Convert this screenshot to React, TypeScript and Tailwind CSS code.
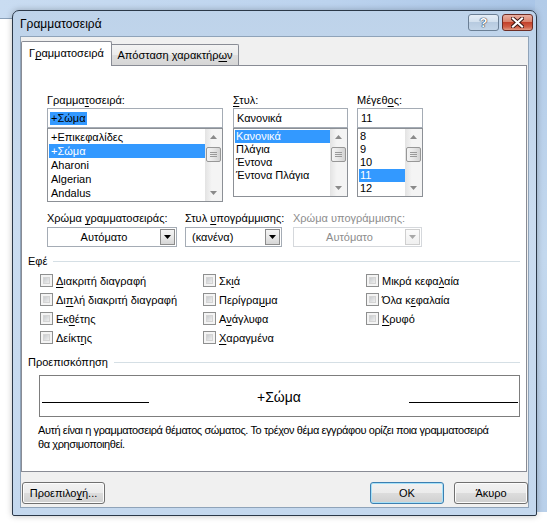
import React from "react";

function U({ children }: { children: React.ReactNode }) {
  return <span className="underline underline-offset-[2px] decoration-[1px]">{children}</span>;
}

function ScrollBar() {
  return (
    <div className="w-[17px] h-full flex flex-col bg-[linear-gradient(to_right,#e3e3e3,#f4f4f4_40%,#f4f4f4)]">
      <div className="h-[16px] flex items-center justify-center">
        <svg width="7" height="4" viewBox="0 0 7 4">
          <path d="M0 4L3.5 0L7 4Z" fill="#8a8a8a" />
        </svg>
      </div>
      <div className="mt-[2px] mx-[1px] h-[15px] rounded-[2px] border border-[#979797] bg-[linear-gradient(to_right,#f4f4f4,#e6e6e6_50%,#d3d3d3)] flex flex-col items-center justify-center gap-[1px]">
        <div className="w-[7px] h-[1px] bg-[#9a9a9a]" />
        <div className="w-[7px] h-[1px] bg-[#9a9a9a]" />
        <div className="w-[7px] h-[1px] bg-[#9a9a9a]" />
      </div>
      <div className="flex-1" />
      <div className="h-[16px] flex items-center justify-center">
        <svg width="7" height="4" viewBox="0 0 7 4">
          <path d="M0 0L7 0L3.5 4Z" fill="#8a8a8a" />
        </svg>
      </div>
    </div>
  );
}

function Check({ children }: { children: React.ReactNode }) {
  return (
    <div className="h-[19px] flex items-center">
      <span className="w-[13px] h-[13px] border border-[#8e8f8f] bg-[#f4f4f4] p-[2px] flex">
        <span className="flex-1 bg-[linear-gradient(135deg,#c9cccf,#eeeeee)] border border-[#d4d4d4]" />
      </span>
      <span className="ml-[3px] whitespace-nowrap">{children}</span>
    </div>
  );
}

function Combo({ text, center, disabled }: { text: string; center?: boolean; disabled?: boolean }) {
  return (
    <div
      className={
        disabled
          ? "h-[20px] border border-[#d5d8dc] bg-white flex items-center"
          : "h-[20px] border border-[#a5acb5] bg-white flex items-center"
      }
    >
      <div
        className={
          (center ? "flex-1 text-center " : "flex-1 pl-[6px] ") + (disabled ? "text-[#8d8d8d]" : "text-black")
        }
      >
        {text}
      </div>
      <div
        className={
          disabled
            ? "w-[15px] h-[16px] mr-[1px] border border-[#cfcfcf] bg-[linear-gradient(to_bottom,#fbfbfb,#f0f0f0)] flex items-center justify-center"
            : "w-[15px] h-[16px] mr-[1px] border border-[#8c8c8c] bg-[linear-gradient(to_bottom,#f4f4f4,#e8e8e8_50%,#d6d6d6)] flex items-center justify-center"
        }
      >
        <svg width="7" height="4" viewBox="0 0 7 4">
          <path d="M0 0L7 0L3.5 4Z" fill={disabled ? "#a8a8a8" : "#000"} />
        </svg>
      </div>
    </div>
  );
}

function Header({ children }: { children: React.ReactNode }) {
  return (
    <div className="h-[14px] flex items-center pl-[6px] pr-[6px]">
      <span className="whitespace-nowrap">{children}</span>
      <div className="ml-[6px] flex-1 h-[1px] bg-[#d5dfe5]" />
    </div>
  );
}

function Btn({ children, def, w }: { children: React.ReactNode; def?: boolean; w: string }) {
  return (
    <div
      className={
        (def
          ? "border-[#3c7fb1] shadow-[inset_0_0_0_1px_#a7e1f8] "
          : "border-[#707070] shadow-[inset_0_0_0_1px_#fcfcfc] ") +
        w +
        " h-[22px] rounded-[3px] border bg-[linear-gradient(to_bottom,#f2f2f2,#ebebeb_50%,#dddddd_50%,#cfcfcf)] flex items-center justify-center"
      }
    >
      {children}
    </div>
  );
}

export default function App() {
  return (
    <div className="relative w-[547px] h-[525px] overflow-hidden bg-white font-['Liberation_Sans',Arial,sans-serif] text-[11px] leading-[14px] text-black">
      <div className="absolute left-0 top-0 w-full h-[18px] bg-[linear-gradient(to_right,#c9dcf1,#bcd3ee_60%,#a9c5e7)]" />
      <div className="absolute left-0 top-[18px] w-[12px] h-[1px] bg-[#8aa0b8]" />
      <div className="absolute right-0 top-0 w-[12px] h-[512px] bg-[linear-gradient(to_bottom,#b2cbe8,#c3d8ee_50%,#b9d0ea)]" />

      <div className="relative ml-[12px] mt-[10px] w-[525px] h-[506px] rounded-t-[7px] rounded-b-[2px] border border-[#2b3848] bg-[linear-gradient(to_bottom,#bed3ea,#cadcf0_40%,#c4d8ee)] px-[7px] pb-[7px] flex flex-col shadow-[0_0_6px_rgba(0,0,0,0.25)]">
        <div className="h-[25px] flex items-start">
          <div className="pt-[6px] text-[12px] leading-[14px] text-black flex-1">Γραμματοσειρά</div>
          <div className="mt-[3px] w-[31px] h-[17px] rounded-[3px] border border-[#6b7f95] bg-[linear-gradient(to_bottom,#e6eef7,#d2e0ee_45%,#b7cbe0_50%,#c3d5e8)] flex items-center justify-center">
            <span className="text-[13px] leading-[13px] font-bold text-white [text-shadow:0_0_1px_#26384d,0_0_1px_#26384d,0_0_1px_#26384d]">?</span>
          </div>
          <div className="mt-[3px] ml-[3px] mr-[-4px] w-[31px] h-[17px] rounded-[3px] border border-[#6e2d24] bg-[linear-gradient(to_bottom,#eab0a1,#d9836d_45%,#c3412a_50%,#d06048_80%,#e19a82)] flex items-center justify-center">
            <svg width="13" height="11" viewBox="0 0 13 11">
              <path d="M2 1.5L11 9.5M11 1.5L2 9.5" stroke="#3a1510" strokeWidth="4" strokeLinecap="square" />
              <path d="M2 1.5L11 9.5M11 1.5L2 9.5" stroke="#ffffff" strokeWidth="2.2" strokeLinecap="square" />
            </svg>
          </div>
        </div>

        <div className="flex-1 border border-[#8fa3b9] bg-[#f0f0f0] flex flex-col">
          <div className="mt-[4px] h-[24px] flex items-end">
            <div className="relative z-10 -mb-px w-[91px] h-[25px] bg-white border border-b-0 border-[#898c95] rounded-t-[2px] pt-[4px] text-center">
              Γ<U>ρ</U>αμματοσειρά
            </div>
            <div className="w-[127px] h-[21px] border border-l-0 border-b-0 border-[#898c95] rounded-tr-[2px] bg-[linear-gradient(to_bottom,#f3f3f3,#ebebeb_50%,#dedede_50%,#d6d6d6)] pt-[3px] text-center">
              Απόσταση χαρακτήρ<U>ω</U>ν
            </div>
          </div>

          <div className="w-[506px] h-[407px] border border-[#898c95] bg-white flex flex-col">
            <div className="mt-[27px] pl-[25px] flex items-start">
              <div className="w-[176px] flex flex-col">
                <div className="h-[14px]">
                  Γραμμα<U>τ</U>οσειρά:
                </div>
                <div className="mt-[1px] h-[20px] border border-[#a5acb5] flex items-center pl-[2px]">
                  <span className="bg-[#3399ff] px-[1px] leading-[13px]">+Σώμα</span>
                </div>
                <div className="h-[74px] border border-[#8c9096] flex">
                  <div className="flex-1 pt-[1px] pl-[1px]">
                    <div className="h-[14px] pl-[2px]">+Επικεφαλίδες</div>
                    <div className="h-[14px] pl-[2px] bg-[#3399ff] text-white">+Σώμα</div>
                    <div className="h-[14px] pl-[2px]">Aharoni</div>
                    <div className="h-[14px] pl-[2px]">Algerian</div>
                    <div className="h-[14px] pl-[2px]">Andalus</div>
                  </div>
                  <ScrollBar />
                </div>
              </div>

              <div className="ml-[10px] w-[115px] flex flex-col">
                <div className="h-[14px]">
                  <U>Σ</U>τυλ:
                </div>
                <div className="mt-[1px] h-[20px] border border-[#a5acb5] flex items-center pl-[3px]">Κανονικά</div>
                <div className="h-[69px] border border-[#8c9096] flex">
                  <div className="flex-1 pt-[1px] pl-[1px]">
                    <div className="h-[13px] leading-[13px] pl-[1px] bg-[#3399ff] text-white">Κανονικά</div>
                    <div className="h-[13px] leading-[13px] pl-[1px]">Πλάγια</div>
                    <div className="h-[13px] leading-[13px] pl-[1px]">Έντονα</div>
                    <div className="h-[13px] leading-[13px] pl-[1px]">Έντονα Πλάγια</div>
                  </div>
                  <ScrollBar />
                </div>
              </div>

              <div className="ml-[9px] w-[66px] flex flex-col">
                <div className="h-[14px]">
                  Μέγεθ<U>ο</U>ς:
                </div>
                <div className="mt-[1px] h-[20px] border border-[#a5acb5] flex items-center pl-[3px]">11</div>
                <div className="h-[69px] border border-[#8c9096] flex">
                  <div className="flex-1 pt-[1px] pl-[1px]">
                    <div className="h-[13px] leading-[13px] pl-[1px]">8</div>
                    <div className="h-[13px] leading-[13px] pl-[1px]">9</div>
                    <div className="h-[13px] leading-[13px] pl-[1px]">10</div>
                    <div className="h-[13px] leading-[13px] pl-[1px] bg-[#3399ff] text-white">11</div>
                    <div className="h-[13px] leading-[13px] pl-[1px]">12</div>
                  </div>
                  <ScrollBar />
                </div>
              </div>
            </div>

            <div className="mt-[9px] pl-[25px] flex items-start">
              <div className="w-[130px] flex flex-col">
                <div className="h-[14px] whitespace-nowrap">
                  Χρώμα <U>γ</U>ραμματοσειράς:
                </div>
                <div className="mt-[2px]">
                  <Combo text="Αυτόματο" center />
                </div>
              </div>
              <div className="ml-[8px] w-[97px] flex flex-col">
                <div className="h-[14px] whitespace-nowrap">
                  Στυλ <U>υ</U>πογράμμισης:
                </div>
                <div className="mt-[2px]">
                  <Combo text="(κανένα)" />
                </div>
              </div>
              <div className="ml-[11px] w-[129px] flex flex-col">
                <div className="h-[14px] whitespace-nowrap text-[#8d8d8d]">Χρώμα υπογράμμισης:</div>
                <div className="mt-[2px]">
                  <Combo text="Αυτόματο" center disabled />
                </div>
              </div>
            </div>

            <div className="mt-[7px]">
              <Header>Εφέ</Header>
            </div>

            <div className="mt-[3px] pl-[18px] grid grid-cols-[163px_163px_1fr]">
              <Check>
                <U>Δ</U>ιακριτή διαγραφή
              </Check>
              <Check>
                Σκ<U>ι</U>ά
              </Check>
              <Check>
                Μικρά κεφα<U>λ</U>αία
              </Check>
              <Check>
                Δι<U>π</U>λή διακριτή διαγραφή
              </Check>
              <Check>
                Περίγρα<U>μ</U>μα
              </Check>
              <Check>
                Όλα κ<U>ε</U>φαλαία
              </Check>
              <Check>
                Εκ<U>θ</U>έτης
              </Check>
              <Check>
                Α<U>ν</U>άγλυφα
              </Check>
              <Check>
                <U>Κ</U>ρυφό
              </Check>
              <Check>
                Δείκτ<U>η</U>ς
              </Check>
              <Check>
                <U>Χ</U>αραγμένα
              </Check>
              <div />
            </div>

            <div className="mt-[8px]">
              <Header>Προεπισκόπηση</Header>
            </div>

            <div className="mt-[6px] ml-[17px] w-[481px] h-[42px] border border-[#7d7d7d] flex items-start pt-[13px]">
              <div className="ml-[2px] mt-[13px] w-[107px] h-0 border-t border-black" />
              <div className="flex-1 text-center text-[14px] leading-[16px]">+Σώμα</div>
              <div className="mr-[1px] mt-[13px] w-[109px] h-0 border-t border-black" />
            </div>

            <div className="mt-[6px] pl-[16px] whitespace-nowrap tracking-[-0.4px]">
              Αυτή είναι η γραμματοσειρά θέματος σώματος. Το τρέχον θέμα εγγράφου ορίζει ποια γραμματοσειρά
              <br />
              θα χρησιμοποιηθεί.
            </div>
          </div>

          <div className="mt-[10px] flex items-start">
            <div className="ml-[1px]">
              <Btn w="w-[83px]">
                Προεπιλο<U>γ</U>ή...
              </Btn>
            </div>
            <div className="flex-1" />
            <Btn w="w-[74px]" def>
              OK
            </Btn>
            <div className="ml-[10px]">
              <Btn w="w-[74px]">Άκυρο</Btn>
            </div>
          </div>
        </div>
      </div>
    </div>
  );
}
